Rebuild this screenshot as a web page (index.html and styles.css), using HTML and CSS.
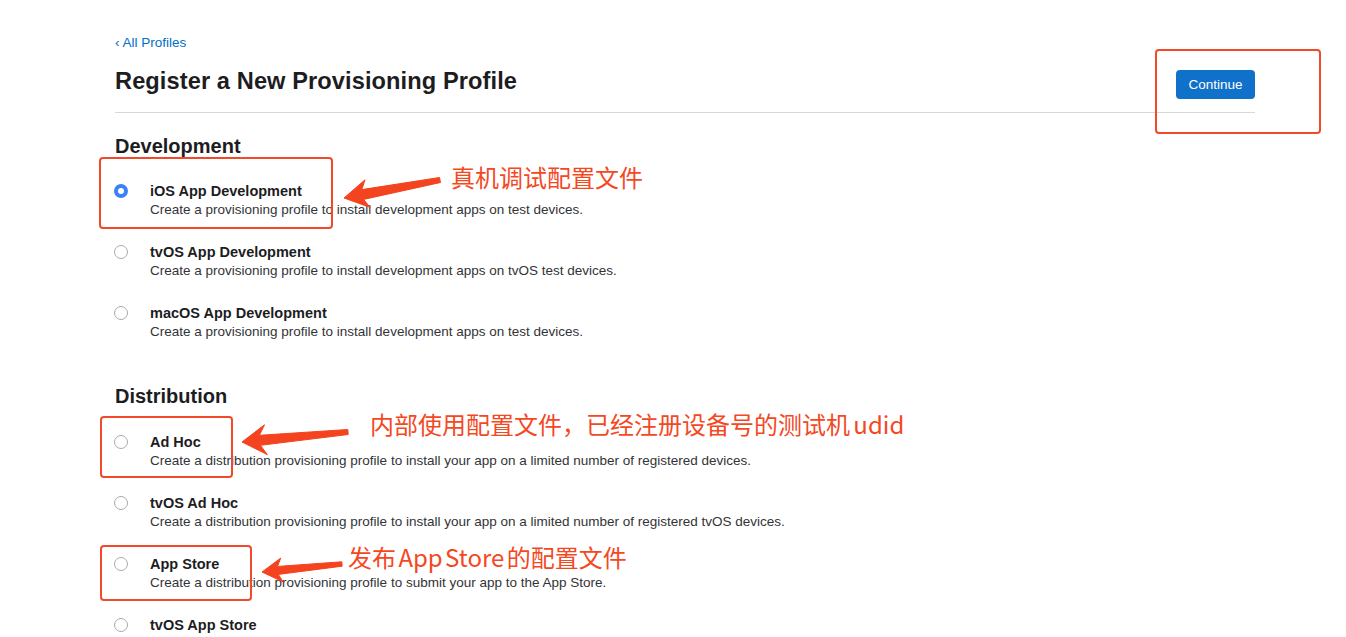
FILE: index.html
```html
<!DOCTYPE html>
<html lang="en">
<head>
<meta charset="utf-8">
<title>Register a New Provisioning Profile</title>
<link rel="stylesheet" href="styles.css">
</head>
<body>
<main class="page">
  <a class="back-link" href="#">‹ All Profiles</a>
  <header class="page-header">
    <h1 class="page-title">Register a New Provisioning Profile</h1>
    <button class="btn-continue" type="button">Continue</button>
  </header>

  <section class="group">
    <h2 class="group-title">Development</h2>
    <ul class="options">
      <li class="option">
        <span class="radio radio-checked"></span>
        <div class="option-text">
          <div class="option-title">iOS App Development</div>
          <div class="option-desc">Create a provisioning profile to install development apps on test devices.</div>
        </div>
      </li>
      <li class="option">
        <span class="radio"></span>
        <div class="option-text">
          <div class="option-title">tvOS App Development</div>
          <div class="option-desc">Create a provisioning profile to install development apps on tvOS test devices.</div>
        </div>
      </li>
      <li class="option">
        <span class="radio"></span>
        <div class="option-text">
          <div class="option-title">macOS App Development</div>
          <div class="option-desc">Create a provisioning profile to install development apps on test devices.</div>
        </div>
      </li>
    </ul>
  </section>

  <section class="group group-dist">
    <h2 class="group-title">Distribution</h2>
    <ul class="options">
      <li class="option">
        <span class="radio"></span>
        <div class="option-text">
          <div class="option-title">Ad Hoc</div>
          <div class="option-desc">Create a distribution provisioning profile to install your app on a limited number of registered devices.</div>
        </div>
      </li>
      <li class="option">
        <span class="radio"></span>
        <div class="option-text">
          <div class="option-title">tvOS Ad Hoc</div>
          <div class="option-desc">Create a distribution provisioning profile to install your app on a limited number of registered tvOS devices.</div>
        </div>
      </li>
      <li class="option">
        <span class="radio"></span>
        <div class="option-text">
          <div class="option-title">App Store</div>
          <div class="option-desc">Create a distribution provisioning profile to submit your app to the App Store.</div>
        </div>
      </li>
      <li class="option">
        <span class="radio"></span>
        <div class="option-text">
          <div class="option-title">tvOS App Store</div>
        </div>
      </li>
    </ul>
  </section>
</main>

<!-- annotation overlay -->
<div class="mark mark-continue"></div>
<div class="mark mark-ios"></div>
<div class="mark mark-adhoc"></div>
<div class="mark mark-store"></div>

<svg class="arrows" width="1346" height="637" viewBox="0 0 1346 637" aria-hidden="true">
  <g fill="#f4431f" stroke="#f4431f" stroke-width="1" stroke-linejoin="round">
    <polygon points="344,198 365.0,179.8 361.8,189.6 439.5,177.5 440.5,182.5 363.6,199.4 370.2,207.4"/>
    <polygon points="242,442 264.5,424.8 259.4,435.3 347.8,429.5 348.2,434.5 260.4,445.3 267.3,454.6"/>
    <polygon points="262,572 280.7,558.1 277.5,566.4 341.8,561.8 342.2,566.2 278.3,574.4 283.1,581.9"/>
  </g>
</svg>

<div class="note note-ios">真机调试配置文件</div>
<div class="note note-adhoc">内部使用配置文件，已经注册设备号的测试机 udid</div>
<div class="note note-store">发布 App Store 的配置文件</div>
</body>
</html>
```

FILE: styles.css
```css
* { box-sizing: border-box; }

html, body {
  margin: 0;
  padding: 0;
  background: #ffffff;
}

body {
  font-family: "Liberation Sans", Arial, sans-serif;
  color: #1d1d1f;
  position: relative;
  overflow: hidden;
  height: 637px;
}

.page {
  width: 1140px;
  margin-left: 115px;
  padding-top: 35px;
}

.back-link {
  display: block;
  font-size: 13.5px;
  line-height: 16px;
  color: #0070c9;
  text-decoration: none;
}

.page-header {
  display: flex;
  justify-content: space-between;
  align-items: flex-start;
  margin-top: 15px;
  padding-bottom: 13px;
  border-bottom: 1px solid #d8d8d8;
}

.page-title {
  margin: 0;
  font-size: 23.6px;
  line-height: 30px;
  font-weight: 700;
  letter-spacing: 0.1px;
  color: #1d1d1f;
}

.btn-continue {
  margin-top: 4px;
  width: 79px;
  height: 29px;
  border: none;
  border-radius: 4px;
  background: #0f71c9;
  color: #ffffff;
  font-family: "Liberation Sans", Arial, sans-serif;
  font-size: 13.5px;
  padding: 0;
}

.group { margin-top: 21px; }
.group-dist { margin-top: 44px; }

.group-title {
  margin: 0;
  font-size: 20px;
  line-height: 24px;
  font-weight: 700;
  color: #1d1d1f;
}

.options {
  list-style: none;
  margin: 24px 0 0;
  padding: 0;
  display: flex;
  flex-direction: column;
  gap: 25px;
}

.group-dist .options { margin-top: 25px; }

.option {
  display: flex;
  align-items: flex-start;
}

.radio {
  flex: none;
  width: 14px;
  height: 14px;
  margin-top: 2px;
  margin-left: -1px;
  margin-right: 22px;
  border-radius: 50%;
  border: 1px solid #ababab;
  background: #fff;
}

.radio-checked {
  border: 4.5px solid #3b82f6;
  background: #fff;
}

.option-text {
  display: flex;
  flex-direction: column;
  gap: 2px;
}

.option-title {
  font-size: 14.5px;
  line-height: 18px;
  font-weight: 700;
  color: #1d1d1f;
}

.option-desc {
  font-size: 13.5px;
  line-height: 16px;
  color: #333336;
}

/* annotations */
.mark {
  position: absolute;
  border: 2px solid #f2492a;
  border-radius: 4px;
}
.mark-continue { left: 1155px; top: 49px; width: 166px; height: 85px; }
.mark-ios { left: 99px; top: 157px; width: 234px; height: 72px; }
.mark-adhoc { left: 100px; top: 416px; width: 133px; height: 62px; }
.mark-store { left: 100px; top: 545px; width: 152px; height: 56px; }

.arrows {
  position: absolute;
  left: 0;
  top: 0;
  pointer-events: none;
}

.note {
  position: absolute;
  font-family: "Noto Sans CJK SC", "Noto Sans", sans-serif;
  font-size: 24px;
  line-height: 30px;
  color: #f4481f;
  white-space: nowrap;
}
.note-ios { left: 451px; top: 162px; }
.note-adhoc { left: 370px; top: 409px; word-spacing: -2px; }
.note-store { left: 348px; top: 542px; word-spacing: -3px; }
```
